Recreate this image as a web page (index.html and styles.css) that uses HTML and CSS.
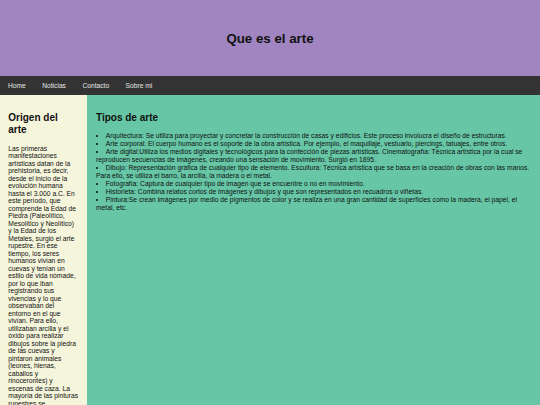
FILE: index.html
```html
<!DOCTYPE html>
<html lang="es">
<head>
<meta charset="utf-8">
<title>Que es el arte</title>
<link rel="stylesheet" href="styles.css">
</head>
<body>
<header class="site-header">
  <h1 class="site-title">Que es el arte</h1>
</header>
<nav class="site-nav">
  <ul class="nav-list">
    <li><a href="#">Home</a></li>
    <li><a href="#">Noticias</a></li>
    <li><a href="#">Contacto</a></li>
    <li><a href="#">Sobre mi</a></li>
  </ul>
</nav>
<div class="layout">
  <aside class="sidebar">
    <h2 class="section-title">Origen del arte</h2>
    <p class="sidebar-text">Las primeras manifestaciones artísticas datan de la prehistoria, es decir, desde el inicio de la evolución humana hasta el 3.000 a.C. En este período, que comprende la Edad de Piedra (Paleolítico, Mesolítico y Neolítico) y la Edad de los Metales, surgió el arte rupestre. En ese tiempo, los seres humanos vivían en cuevas y tenían un estilo de vida nómade, por lo que iban registrando sus vivencias y lo que observaban del entorno en el que vivían. Para ello, utilizaban arcilla y el óxido para realizar dibujos sobre la piedra de las cuevas y pintaron animales (leones, hienas, caballos y rinocerontes) y escenas de caza. La mayoría de las pinturas rupestres se encuentran en cuevas y representan escenas de la vida cotidiana.</p>
  </aside>
  <main class="content">
    <h2 class="section-title">Tipos de arte</h2>
    <ul class="art-list">
      <li>Arquitectura: Se utiliza para proyectar y concretar la construcción de casas y edificios. Este proceso involucra el diseño de estructuras.</li>
      <li>Arte corporal: El cuerpo humano es el soporte de la obra artística. Por ejemplo, el maquillaje, vestuario, piercings, tatuajes, entre otros.</li>
      <li>Arte digital:Utiliza los medios digitales y tecnológicos para la confección de piezas artísticas. Cinematografía: Técnica artística por la cual se reproducen secuencias de imágenes, creando una sensación de movimiento. Surgió en 1895.</li>
      <li>Dibujo: Representación gráfica de cualquier tipo de elemento. Escultura: Técnica artística que se basa en la creación de obras con las manos. Para ello, se utiliza el barro, la arcilla, la madera o el metal.</li>
      <li>Fotografía: Captura de cualquier tipo de imagen que se encuentre o no en movimiento.</li>
      <li>Historieta: Combina relatos cortos de imágenes y dibujos y que son representados en recuadros o viñetas.</li>
      <li>Pintura:Se crean imágenes por medio de pigmentos de color y se realiza en una gran cantidad de superficies como la madera, el papel, el metal, etc.</li>
    </ul>
  </main>
</div>
</body>
</html>
```
FILE: styles.css
```css
html, body {
  margin: 0;
  padding: 0;
}
body {
  font-family: "Liberation Sans", Arial, sans-serif;
  font-size: 6.67px;
  color: #111;
  background: #66c6a5;
  height: 405px;
  overflow: hidden;
}
.site-header {
  background: #a185c1;
  height: 76px;
  display: flex;
  align-items: center;
  justify-content: center;
}
.site-title {
  margin: 0;
  font-size: 13.3px;
  font-weight: bold;
  color: #111;
}
.site-nav {
  background: #333333;
  height: 19px;
  display: flex;
  align-items: center;
}
.nav-list {
  list-style: none;
  margin: 0;
  padding: 0 0 0 8px;
  display: flex;
  gap: 16.5px;
}
.nav-list a {
  color: #e6e6e6;
  text-decoration: none;
  font-size: 6.67px;
}
.layout {
  display: flex;
  align-items: stretch;
  min-height: 310px;
}
.sidebar {
  flex: 0 0 87px;
  box-sizing: border-box;
  background: #f5f5dc;
  padding: 8.3px 8.3px 0 8.3px;
}
.content {
  flex: 1;
  padding: 8.3px 9px;
}
.section-title {
  font-size: 10px;
  font-weight: bold;
  margin: 8.3px 0;
  line-height: 12.5px;
}
.sidebar-text {
  margin: 0;
  font-size: 6.72px;
  line-height: 7.5px;
}
.art-list {
  margin: 0;
  padding: 0;
  font-size: 6.72px;
  list-style-position: inside;
  line-height: 8px;
}
```
